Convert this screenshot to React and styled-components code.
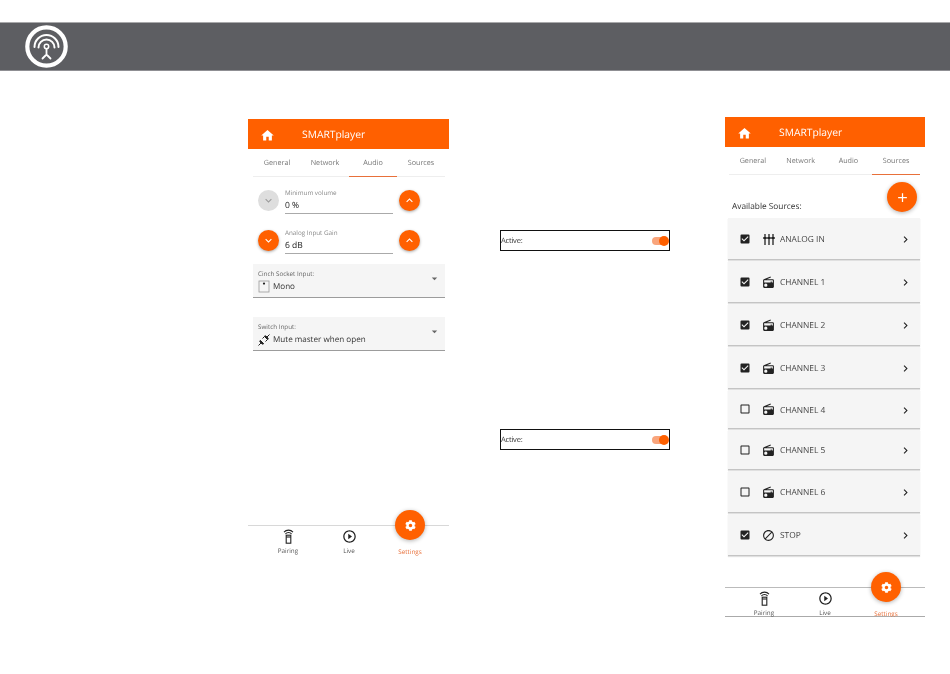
import React from 'react'
import styled, { createGlobalStyle } from 'styled-components'
import {
  MdHome, MdExpandLess, MdExpandMore, MdAdd, MdCheckBox, MdCheckBoxOutlineBlank,
  MdChevronRight, MdBlock, MdPlayCircleOutline, MdArrowDropDown,
} from 'react-icons/md'
import { FaCog } from 'react-icons/fa'

const ORANGE = '#ff6000'

const GlobalStyle = createGlobalStyle`
  html, body { margin: 0; padding: 0; background: #fff; }
  body {
    font-family: "Open Sans", "Liberation Sans", sans-serif;
    color: #333;
    text-rendering: geometricPrecision;
  }
`

const LogoIcon = () => (
  <svg width="43" height="43" viewBox="0 0 43 43" fill="none" stroke="#fff" strokeLinecap="round">
    <circle cx="21.500" cy="21.500" r="19.200" strokeWidth="4.200" />
    <path d="M9.500 22a12 12 0 0 1 24 0" strokeWidth="2" />
    <path d="M13.500 22.500a8 8 0 0 1 16 0" strokeWidth="2" />
    <circle cx="21.500" cy="21.500" r="2.200" strokeWidth="1.500" />
    <path d="M21.500 24v5.500M21.500 29.500l-4 4M21.500 29.500l4 4" strokeWidth="1.800" />
  </svg>
)

const PairingIcon = () => (
  <svg width="13" height="15" viewBox="0 0 13 15" fill="none" stroke="#222" strokeWidth="1.100">
    <path d="M2 3.200a6 6 0 0 1 9 0M3.400 5a4 4 0 0 1 6.200 0" />
    <rect x="4.200" y="6.200" width="4.600" height="8" />
    <path d="M4.200 8h4.600" />
  </svg>
)

const SlidersIcon = () => (
  <svg width="12" height="11" viewBox="0 0 12 11" stroke="#222" strokeWidth="1.300">
    <path d="M2 0v11M6 0v11M10 0v11" />
    <path d="M0.300 4h3.400M4.300 4h3.400M8.300 4h3.400" strokeWidth="2" />
  </svg>
)

const RadioIcon = () => (
  <svg width="13" height="13" viewBox="0 0 24 24" fill="#222">
    <path d="M20,6A2,2 0 0,1 22,8V20A2,2 0 0,1 20,22H4A2,2 0 0,1 2,20V8C2,7.150 2.530,6.420 3.280,6.130L15.710,1L16.470,2.830L8.830,6H20M20,8H4V12H16V10H18V12H20V8M7,14A3,3 0 0,0 4,17A3,3 0 0,0 7,20A3,3 0 0,0 10,17A3,3 0 0,0 7,14Z" />
  </svg>
)

const SocketIcon = () => (
  <svg width="12" height="13" viewBox="0 0 12 13" fill="none">
    <rect x="1" y="1" width="10" height="11" stroke="#999" strokeWidth="0.800" />
    <circle cx="6" cy="3.600" r="1.100" fill="#222" />
  </svg>
)

const PlugIcon = () => (
  <svg width="12" height="12" viewBox="0 0 12 12" stroke="#222" fill="#222" strokeWidth="1">
    <path d="M0.500 11.500L3 9M11.500 0.500L9 3" />
    <path d="M2.300 6.300L5.700 9.700L4.300 10.200L1.800 7.700Z" />
    <path d="M6.300 2.300L9.700 5.700L10.200 4.300L7.700 1.800Z" />
    <path d="M4.500 4.500L6 3M7.500 7.500L9 6" />
  </svg>
)

const Header = styled.header`
  margin-top: 22px;
  height: 49px;
  box-sizing: border-box;
  padding-left: 25px;
  display: flex;
  align-items: center;
  background: #5d5e62;
  border-top: 1px solid #a9a9ab;
  border-bottom: 1px solid #8f8f93;
`

const Board = styled.main`
  display: flex;
  align-items: flex-start;
  padding-left: 248px;
  will-change: transform;
`

const Phone = styled.section`
  position: relative;
  display: flex;
  flex-direction: column;
  flex: none;
  box-sizing: border-box;
  width: ${p => p.$width}px;
  height: ${p => p.$height}px;
  margin-top: ${p => p.$top}px;
`

const AppBar = styled.div`
  height: 30px;
  flex: none;
  box-sizing: border-box;
  display: flex;
  align-items: center;
  background: ${ORANGE};
  color: #fff;
  font-size: 10.300px;
  padding: 2px 0 0 12px;
  svg { font-size: 15px; margin-right: 27px; }
`

const Tabs = styled.div`
  display: flex;
  height: ${p => p.$height}px;
  flex: none;
  margin: 0 ${p => p.$right}px 0 ${p => p.$left}px;
  border-bottom: 1px solid #eee;
`

const Tab = styled.div`
  flex: 1;
  display: flex;
  align-items: center;
  justify-content: center;
  font-size: 7.200px;
  color: #777;
  box-shadow: ${p => (p.$active ? '0 1px 0 #e8703a' : 'none')};
`

const Stepper = styled.div`
  display: grid;
  grid-template-columns: 21px 108px 21px;
  column-gap: 6px;
  align-items: start;
  margin: ${p => p.$top}px 0 0 10px;
`

const RoundButton = styled.div`
  width: 21px;
  height: 21px;
  margin-top: 2px;
  border-radius: 50%;
  display: flex;
  align-items: center;
  justify-content: center;
  color: ${p => (p.$off ? '#9a9a9a' : '#fff')};
  background: ${p => (p.$off ? '#dedede' : ORANGE)};
  box-shadow: ${p => (p.$off ? 'none' : '0 1px 3px rgba(0,0,0,.35)')};
  font-size: 13px;
`

const StepField = styled.div`
  height: 26px;
  box-sizing: border-box;
  border-bottom: 1px solid #aaa;
`

const StepLabel = styled.div`
  font-size: 6.300px;
  line-height: 9px;
  color: #888;
`

const StepValue = styled.div`
  margin-top: 3px;
  font-size: 8.500px;
  line-height: 12px;
  color: #222;
`

const Select = styled.div`
  position: relative;
  margin: ${p => p.$top}px 4px 0 5px;
  height: 34px;
  box-sizing: border-box;
  padding: 6px 5px 0;
  background: #f5f5f5;
  border-bottom: 1px solid #9c9c9c;
`

const SelectLabel = styled.div`
  font-size: 6.300px;
  line-height: 8px;
  color: #666;
`

const SelectValue = styled.div`
  display: flex;
  align-items: center;
  gap: 3px;
  margin-top: 2px;
  font-size: 8.100px;
  line-height: 13px;
  color: #333;
`

const SelectArrow = styled.span`
  position: absolute;
  right: 4px;
  top: 8px;
  color: #666;
  font-size: 13px;
  display: flex;
`

const BottomNav = styled.nav`
  position: relative;
  margin-top: auto;
  height: ${p => p.$height}px;
  box-sizing: border-box;
  display: grid;
  grid-template-columns: repeat(3, 61px);
  justify-content: start;
  padding-left: ${p => p.$left}px;
  border-top: ${p => (p.$closed ? '1px solid #bbb' : '1.500px solid #d8d8d8')};
  border-bottom: ${p => (p.$closed ? '1px solid #aaa' : 'none')};
`

const NavItem = styled.div`
  display: flex;
  flex-direction: column;
  align-items: center;
  padding-top: 3px;
  font-size: 6.300px;
  line-height: 9px;
  color: ${p => (p.$active ? '#e8703a' : '#555')};
  svg { display: block; height: 15px; margin-bottom: 2px; }
`

const NavLabelLow = styled.span`
  margin-top: 18px;
`

const Fab = styled.div`
  position: absolute;
  width: 30px;
  height: 30px;
  border-radius: 50%;
  display: flex;
  align-items: center;
  justify-content: center;
  background: ${ORANGE};
  color: #fff;
  box-shadow: 0 1px 4px rgba(0,0,0,.3);
  font-size: ${p => p.$size}px;
  top: ${p => p.$y}px;
  right: ${p => p.$x}px;
`

const MiddleColumn = styled.div`
  flex: none;
  width: 170px;
  margin: 159px 55px 0 51px;
  display: flex;
  flex-direction: column;
  gap: 178px;
`

const ActiveBox = styled.div`
  height: 21px;
  box-sizing: border-box;
  border: 1px solid #111;
  display: flex;
  align-items: center;
  justify-content: space-between;
  padding-right: 1px;
  font-size: 7.500px;
  letter-spacing: -0.200px;
  color: #333;
`

const Toggle = styled.div`
  position: relative;
  width: 16px;
  height: 8px;
  border-radius: 4px;
  background: #f9a57c;
  &::after {
    content: '';
    position: absolute;
    right: -1px;
    top: -1px;
    width: 10px;
    height: 10px;
    border-radius: 50%;
    background: ${ORANGE};
  }
`

const SourcesTitle = styled.div`
  margin: 24px 0 0 7px;
  height: 19px;
  font-size: 8.300px;
  line-height: 16px;
  color: #333;
`

const SourceList = styled.div`
  display: flex;
  flex-direction: column;
  gap: 1px;
  margin: 0 5px 0 3px;
`

const SourceRow = styled.div`
  height: ${p => p.$height}px;
  box-sizing: border-box;
  display: flex;
  align-items: center;
  padding: 2px 8px 0 11px;
  background: #f5f5f5;
  border-bottom: 1px solid #c4c4c4;
  box-shadow: 0 1px 1px rgba(0,0,0,.12);
  font-size: 8.400px;
  color: #444;
`

const CheckSlot = styled.span`
  display: flex;
  font-size: 12px;
  color: #222;
  margin-right: 10px;
  margin-top: -2px;
`

const SourceIcon = styled.span`
  width: 15px;
  display: flex;
  justify-content: center;
  font-size: 13px;
  color: #222;
  margin-right: 4px;
  margin-top: -1px;
`

const SourceName = styled.span`
  flex: 1;
`

const Chevron = styled.span`
  display: flex;
  font-size: 13px;
  color: #222;
`

const TABS = ['General', 'Network', 'Audio', 'Sources']

const SOURCES = [
  { name: 'ANALOG IN', checked: true, icon: <SlidersIcon />, height: 42 },
  { name: 'CHANNEL 1', checked: true, icon: <RadioIcon />, height: 42 },
  { name: 'CHANNEL 2', checked: true, icon: <RadioIcon />, height: 42 },
  { name: 'CHANNEL 3', checked: true, icon: <RadioIcon />, height: 42 },
  { name: 'CHANNEL 4', checked: false, icon: <RadioIcon />, height: 39 },
  { name: 'CHANNEL 5', checked: false, icon: <RadioIcon />, height: 40 },
  { name: 'CHANNEL 6', checked: false, icon: <RadioIcon />, height: 42 },
  { name: 'STOP', checked: true, icon: <MdBlock />, height: 42 },
]

const Bar = () => (
  <AppBar>
    <MdHome />
    <span>SMARTplayer</span>
  </AppBar>
)

const TabRow = ({ active, height, left, right }) => (
  <Tabs $height={height} $left={left} $right={right}>
    {TABS.map(t => <Tab key={t} $active={t === active}>{t}</Tab>)}
  </Tabs>
)

const StepperRow = ({ top, label, value, off }) => (
  <Stepper $top={top}>
    <RoundButton $off={off}><MdExpandMore /></RoundButton>
    <StepField>
      <StepLabel>{label}</StepLabel>
      <StepValue>{value}</StepValue>
    </StepField>
    <RoundButton><MdExpandLess /></RoundButton>
  </Stepper>
)

const SelectBox = ({ top, label, icon, value }) => (
  <Select $top={top}>
    <SelectLabel>{label}</SelectLabel>
    <SelectValue>{icon}{value}</SelectValue>
    <SelectArrow><MdArrowDropDown /></SelectArrow>
  </Select>
)

const Nav = ({ height, left, closed }) => (
  <BottomNav $height={height} $left={left} $closed={closed}>
    <NavItem><PairingIcon />Pairing</NavItem>
    <NavItem><MdPlayCircleOutline color="#222" size={15} />Live</NavItem>
    <NavItem $active><NavLabelLow>Settings</NavLabelLow></NavItem>
    <Fab $size={11} $x={24} $y={-16}><FaCog /></Fab>
  </BottomNav>
)

export default function App() {
  return (
    <>
      <GlobalStyle />
      <Header><LogoIcon /></Header>
      <Board>
        <Phone $width={201} $height={438} $top={48}>
          <Bar />
          <TabRow active="Audio" height={27} left={5} right={4} />
          <StepperRow top={11} label="Minimum volume" value="0 %" off />
          <StepperRow top={14} label="Analog Input Gain" value="6 dB" />
          <SelectBox top={10} label="Cinch Socket Input:" icon={<SocketIcon />} value="Mono" />
          <SelectBox top={19} label="Switch Input:" icon={<PlugIcon />} value="Mute master when open" />
          <Nav height={32} left={9.500} />
        </Phone>
        <MiddleColumn>
          <ActiveBox>Active:<Toggle /></ActiveBox>
          <ActiveBox>Active:<Toggle /></ActiveBox>
        </MiddleColumn>
        <Phone $width={200} $height={500} $top={46}>
          <Bar />
          <TabRow active="Sources" height={27} left={4} right={5} />
          <Fab $size={15} $x={8} $y={65}><MdAdd /></Fab>
          <SourcesTitle>Available Sources:</SourcesTitle>
          <SourceList>
            {SOURCES.map(s => (
              <SourceRow key={s.name} $height={s.height}>
                <CheckSlot>{s.checked ? <MdCheckBox /> : <MdCheckBoxOutlineBlank />}</CheckSlot>
                <SourceIcon>{s.icon}</SourceIcon>
                <SourceName>{s.name}</SourceName>
                <Chevron><MdChevronRight /></Chevron>
              </SourceRow>
            ))}
          </SourceList>
          <Nav height={30} left={8.500} closed />
        </Phone>
      </Board>
    </>
  )
}
